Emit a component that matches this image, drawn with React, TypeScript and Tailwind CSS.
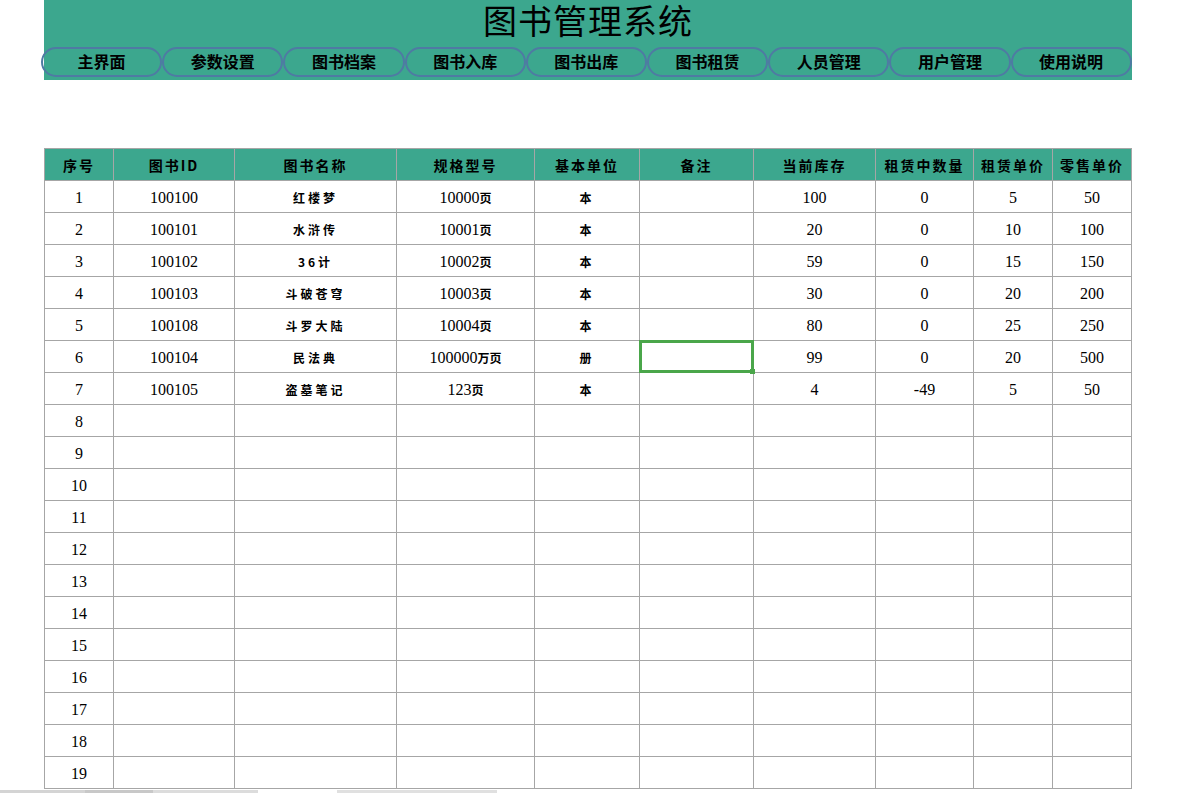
import React from 'react';

const navItems = ['主界面', '参数设置', '图书档案', '图书入库', '图书出库', '图书租赁', '人员管理', '用户管理', '使用说明'];

const columns = [
  { title: '序号', width: 69 },
  { title: '图书ID', width: 121 },
  { title: '图书名称', width: 162 },
  { title: '规格型号', width: 138 },
  { title: '基本单位', width: 105 },
  { title: '备注', width: 114 },
  { title: '当前库存', width: 122 },
  { title: '租赁中数量', width: 98 },
  { title: '租赁单价', width: 79 },
  { title: '零售单价', width: 79 },
];

interface Book {
  id: string;
  name: string;
  spec: string;
  unit: string;
  stock: string;
  renting: string;
  rent: string;
  price: string;
}

const books: Book[] = [
  { id: '100100', name: '红楼梦', spec: '10000页', unit: '本', stock: '100', renting: '0', rent: '5', price: '50' },
  { id: '100101', name: '水浒传', spec: '10001页', unit: '本', stock: '20', renting: '0', rent: '10', price: '100' },
  { id: '100102', name: '36计', spec: '10002页', unit: '本', stock: '59', renting: '0', rent: '15', price: '150' },
  { id: '100103', name: '斗破苍穹', spec: '10003页', unit: '本', stock: '30', renting: '0', rent: '20', price: '200' },
  { id: '100108', name: '斗罗大陆', spec: '10004页', unit: '本', stock: '80', renting: '0', rent: '25', price: '250' },
  { id: '100104', name: '民法典', spec: '100000万页', unit: '册', stock: '99', renting: '0', rent: '20', price: '500' },
  { id: '100105', name: '盗墓笔记', spec: '123页', unit: '本', stock: '4', renting: '-49', rent: '5', price: '50' },
];

const num = "font-['Liberation_Serif','Noto_Sans_CJK_SC',serif] text-[16px] leading-none text-black";
const small = "font-['Noto_Sans_CJK_SC',sans-serif] text-[12px] leading-none font-semibold tracking-[3px] text-black";
const cell = 'border border-[#a6a6a6] h-[32px] text-center p-0 pt-[2px]';

const Spec: React.FC<{ value: string }> = ({ value }) => {
  const m = value.match(/^(\d+)(.*)$/);
  if (!m) return <>{value}</>;
  return (
    <>
      <span className={num}>{m[1]}</span>
      <span className="font-['Noto_Sans_CJK_SC',sans-serif] text-[12px] leading-none font-semibold text-black">{m[2]}</span>
    </>
  );
};

export default function App() {
  const rows = Array.from({ length: 19 }, (_, i) => i);

  return (
    <div className="w-[1182px] h-[793px] bg-white overflow-hidden relative">
      <div className="ml-[44px] w-[1088px] h-[80px] bg-[#3ca78e] flex flex-col">
        <h1 className="h-[44px] text-center font-['Noto_Sans_CJK_SC',sans-serif] text-[34px] leading-[40px] text-black tracking-[1px]">
          图书管理系统
        </h1>
        <nav className="flex -ml-[3px] mt-[3px]">
          {navItems.map((item) => (
            <button
              key={item}
              className="w-[121.2px] h-[30px] shrink-0 rounded-full border-2 border-[#4f7aa3] bg-transparent font-['Noto_Sans_CJK_SC',sans-serif] text-[16px] font-bold leading-none text-black pb-[3px]"
            >
              {item}
            </button>
          ))}
        </nav>
      </div>

      <table className="ml-[44px] mt-[68px] border-collapse table-fixed w-[1088px]">
        <colgroup>
          {columns.map((c) => (
            <col key={c.title} style={{ width: c.width }} />
          ))}
        </colgroup>
        <thead>
          <tr className="bg-[#3ca78e]">
            {columns.map((c) => (
              <th
                key={c.title}
                className="border border-[#a6a6a6] h-[32px] p-0 pt-[1px] text-center font-['Noto_Sans_CJK_SC',sans-serif] text-[14px] font-bold tracking-[2px] text-black whitespace-nowrap"
              >
                {c.title}
              </th>
            ))}
          </tr>
        </thead>
        <tbody>
          {rows.map((i) => {
            const b = books[i];
            return (
              <tr key={i}>
                <td className={`${cell} ${num} ${i === 3 ? 'text-[#4a5a82]' : ''}`}>{i + 1}</td>
                <td className={`${cell} ${num}`}>{b?.id}</td>
                <td className={`${cell} ${small}`}>{b?.name}</td>
                <td className={`${cell} leading-none`}>{b && <Spec value={b.spec} />}</td>
                <td className={`${cell} ${small}`}>{b?.unit}</td>
                <td className={`${cell} ${i === 5 ? 'relative' : ''}`}>
                  {i === 5 && (
                    <div className="absolute -left-[1px] -top-[1px] -right-[1px] -bottom-[1px] border-[3px] border-[#4aa64a]">
                      <div className="absolute -right-[4px] -bottom-[4px] w-[5px] h-[5px] bg-[#4aa64a]" />
                    </div>
                  )}
                </td>
                <td className={`${cell} ${num} ${i === 6 ? 'text-[#5a6b8c]' : ''}`}>{b?.stock}</td>
                <td className={`${cell} ${num}`}>{b?.renting}</td>
                <td className={`${cell} ${num}`}>{b?.rent}</td>
                <td className={`${cell} ${num}`}>{b?.price}</td>
              </tr>
            );
          })}
        </tbody>
      </table>

      <div className="absolute left-0 bottom-0 w-full h-[3px] flex">
        <div className="w-[85px] bg-[#d4d4d4]" />
        <div className="w-[68px] bg-[#c8c8c8]" />
        <div className="w-[105px] bg-[#dcdcdc]" />
        <div className="w-[79px] bg-white" />
        <div className="w-[160px] bg-[#e0e0e0]" />
        <div className="flex-1 bg-white" />
      </div>
    </div>
  );
}
